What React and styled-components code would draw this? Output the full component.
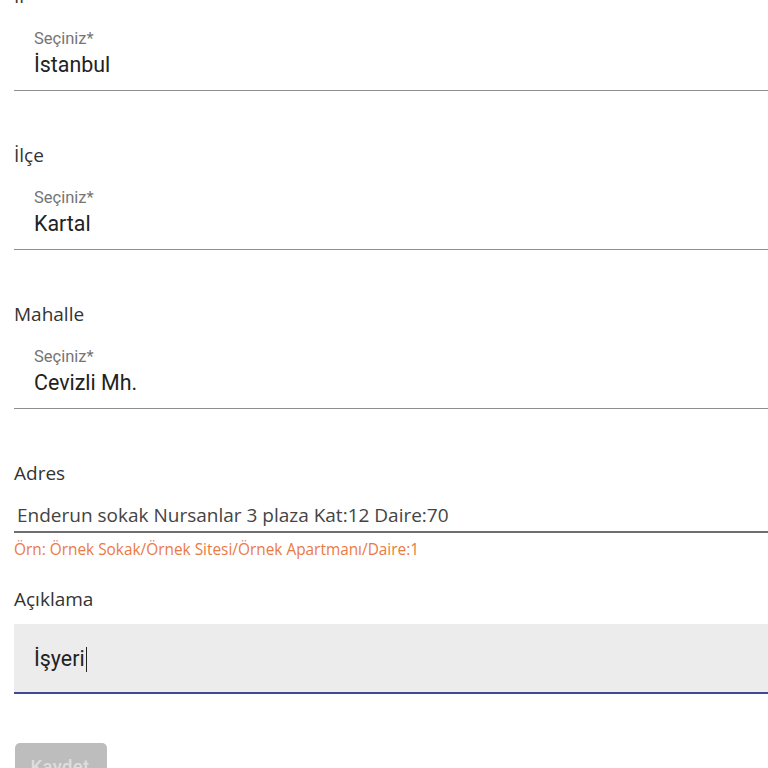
import React from "react";
import styled, { createGlobalStyle } from "styled-components";

const Global = createGlobalStyle`
  html, body { margin: 0; padding: 0; background: #fff; overflow: hidden; }
  body { width: 768px; height: 768px; }
`;

const Page = styled.div`
  margin-top: -17px;
  padding-left: 14px;
  display: flex;
  flex-direction: column;
`;

const Section = styled.section`
  display: flex;
  flex-direction: column;
  margin-bottom: ${(p) => p.$mb ?? 0}px;
`;

const Label = styled.div`
  font-family: "Open Sans", "Noto Sans", sans-serif;
  font-size: 19px;
  line-height: 26px;
  height: 26px;
  color: #333;
  margin-bottom: ${(p) => p.$mb}px;
`;

const Select = styled.div`
  display: flex;
  flex-direction: column;
  padding: 0 0 12px 20px;
  border-bottom: 1px solid #8f8f8f;
  font-family: Roboto, sans-serif;
`;

const SmallLabel = styled.div`
  font-size: 16.5px;
  line-height: 16px;
  color: #757575;
  margin-bottom: 5px;
`;

const Value = styled.div`
  font-size: 21.4px;
  line-height: 26px;
  color: #222;
`;

const TextInput = styled.div`
  font-family: "Open Sans", "Noto Sans", sans-serif;
  font-size: 19px;
  line-height: 26px;
  color: #444;
  padding: 0 0 3px 3px;
  border-bottom: 2px solid #6e6e6e;
`;

const Helper = styled.div`
  font-family: "Open Sans", "Noto Sans", sans-serif;
  font-size: 15.4px;
  line-height: 18px;
  color: #ea7a45;
  margin-top: 8px;
`;

const Filled = styled.div`
  background: #ececec;
  padding: 22px 0 20px 20px;
  border-bottom: 2px solid #3f4a92;
  font-family: Roboto, sans-serif;
  font-size: 21.4px;
  line-height: 26px;
  color: #222;
  display: flex;
  align-items: center;
`;

const Caret = styled.span`
  display: inline-block;
  width: 1px;
  height: 25px;
  background: #222;
  margin-left: 1px;
`;

const Button = styled.button`
  align-self: flex-start;
  width: 92px;
  height: 48px;
  margin-left: 1px;
  border: none;
  border-radius: 5px;
  background: #bdbdbd;
  color: #dedede;
  font-family: Roboto, sans-serif;
  font-weight: 500;
  font-size: 18.5px;
  letter-spacing: 0.3px;
  padding: 0 2px 0 0;
`;

const selects = [
  { label: "İl", value: "İstanbul" },
  { label: "İlçe", value: "Kartal" },
  { label: "Mahalle", value: "Cevizli Mh." },
];

export default function App() {
  return (
    <>
      <Global />
      <Page>
        {selects.map((s) => (
          <Section key={s.label} $mb={51}>
            <Label $mb={22}>{s.label}</Label>
            <Select>
              <SmallLabel>Seçiniz*</SmallLabel>
              <Value>{s.value}</Value>
            </Select>
          </Section>
        ))}
        <Section $mb={27}>
          <Label $mb={16}>Adres</Label>
          <TextInput>Enderun sokak Nursanlar 3 plaza Kat:12 Daire:70</TextInput>
          <Helper>Örn: Örnek Sokak/Örnek Sitesi/Örnek Apartmanı/Daire:1</Helper>
        </Section>
        <Section $mb={49}>
          <Label $mb={12}>Açıklama</Label>
          <Filled>
            İşyeri<Caret />
          </Filled>
        </Section>
        <Button disabled>Kaydet</Button>
      </Page>
    </>
  );
}
